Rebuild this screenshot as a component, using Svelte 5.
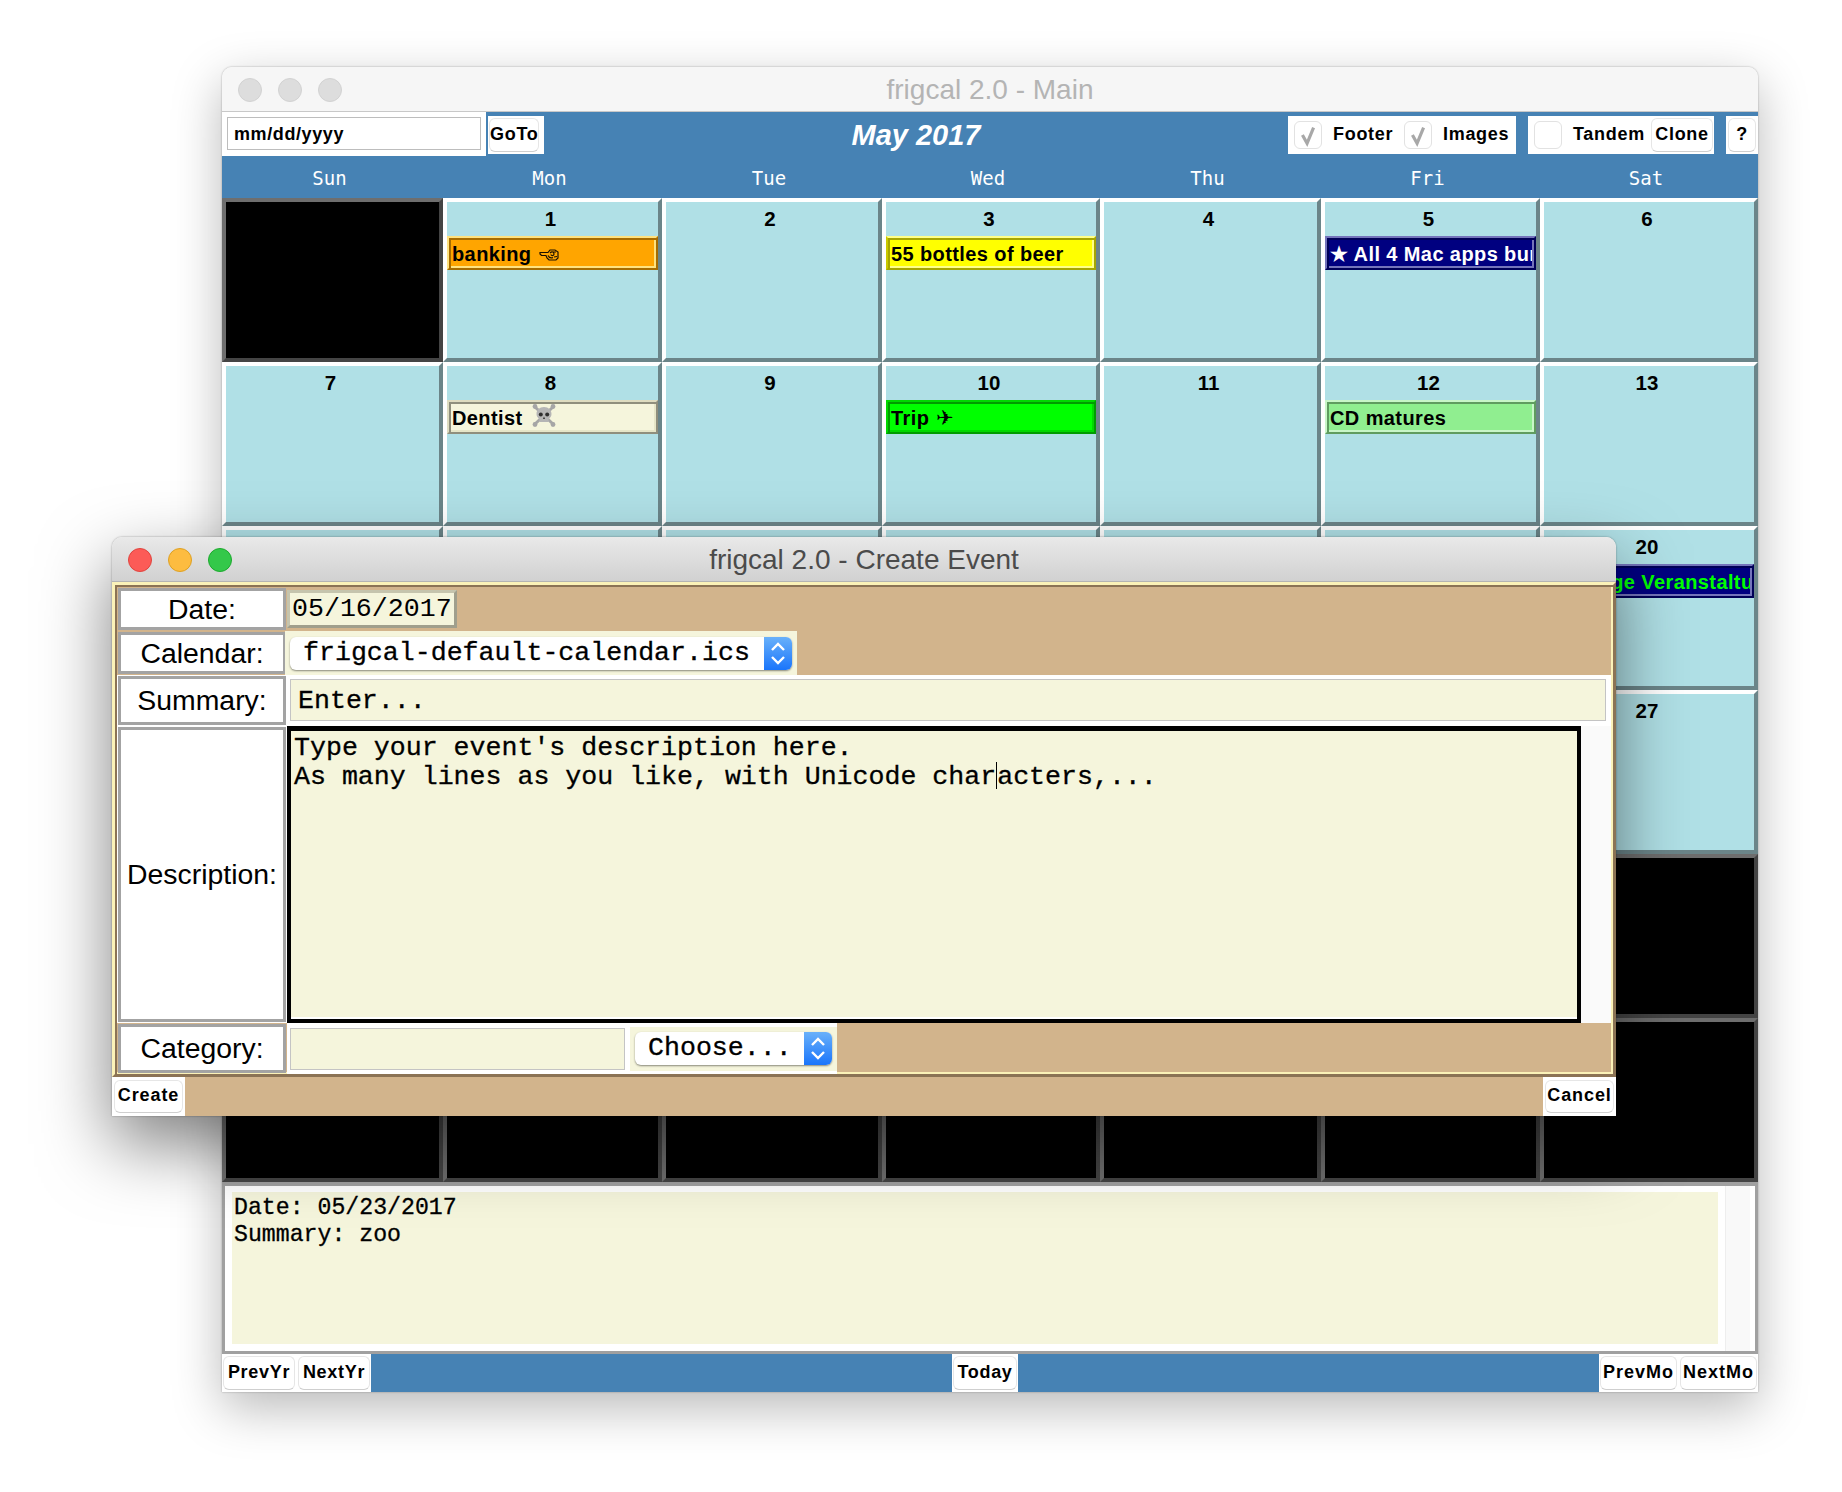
<script>
  const weekdays = ['Sun', 'Mon', 'Tue', 'Wed', 'Thu', 'Fri', 'Sat'];

  // event bars by day number
  const events = {
    1: { text: 'banking', icon: 'hand', kind: 'orange' },
    3: { text: '55 bottles of beer', kind: 'yellow' },
    5: { text: '★ All 4 Mac apps bundled', kind: 'navy' },
    8: { text: 'Dentist', icon: 'skull', kind: 'beige' },
    10: { text: 'Trip', icon: 'plane', kind: 'lime' },
    12: { text: 'CD matures', kind: 'green' },
    20: { text: 'Wichtige Veranstaltung', kind: 'navy2' },
    23: { text: 'zoo', kind: 'beige' }
  };

  // May 2017 starts on a Monday, 42 cells in all
  const cells = Array.from({ length: 42 }, (_, i) => (i >= 1 && i <= 31 ? i : 0));
</script>

<div class="desktop">
  <section class="win main">
    <header class="titlebar idle">
      <span class="dots"><i></i><i></i><i></i></span>
      <span class="wintitle">frigcal 2.0 - Main</span>
    </header>

    <div class="toolbar">
      <div class="goto">
        <div class="dateinput"><input value="mm/dd/yyyy" readonly /></div>
        <div class="btnbox"><button>GoTo</button></div>
      </div>
      <div class="month">May 2017</div>
      <div class="tools">
        <div class="toolbox first">
          <span class="check"><svg viewBox="0 0 28 28"><path d="M8 14l5 9 7-17" /></svg></span>
          <span class="toollabel">Footer</span>
          <span class="check"><svg viewBox="0 0 28 28"><path d="M8 14l5 9 7-17" /></svg></span>
          <span class="toollabel">Images</span>
        </div>
        <div class="toolbox second">
          <span class="check"></span>
          <span class="toollabel">Tandem</span>
          <button class="clone">Clone</button>
        </div>
        <div class="toolbox third"><button>?</button></div>
      </div>
    </div>

    <div class="weekdays">
      {#each weekdays as day}
        <div>{day}</div>
      {/each}
    </div>

    <div class="grid">
      {#each cells as n}
        {#if n}
          <div class="cell">
            <div class="num">{n}</div>
            {#if events[n]}
              <div class="event {events[n].kind}">
                <div class="eventtext">
                  {events[n].text}
                  {#if events[n].icon === 'hand'}
                    <svg class="hand" viewBox="0 0 20 12">
                      <path d="M1 3.5h8l2-2.5h5l3 2v6l-2 2h-7l-2-2-1-2.5H2.5L1 5z" />
                      <path d="M11 4c2-2 4-1 4 1s-3 2-3 .5M9 6.5c1 2 3 3 5 2M14 3l3 0M15 8l3-.5" />
                    </svg>
                  {:else if events[n].icon === 'skull'}
                    <svg class="skull" viewBox="0 0 24 23">
                      <path class="bone" d="M3 3l18 17M21 3L3 20" />
                      <circle class="bone-end" cx="3" cy="2.5" r="2.4" />
                      <circle class="bone-end" cx="21" cy="2.5" r="2.4" />
                      <circle class="bone-end" cx="3" cy="20.5" r="2.4" />
                      <circle class="bone-end" cx="21" cy="20.5" r="2.4" />
                      <path class="head" d="M12 3c-4.500 0-7.500 3-7.500 7 0 2.500 1.500 4 3 5v3h9v-3c1.500-1 3-2.500 3-5 0-4-3-7-7.500-7z" />
                      <circle class="socket" cx="8.800" cy="10.500" r="2" />
                      <circle class="socket" cx="15.200" cy="10.500" r="2" />
                      <path class="socket" d="M12 12.500l1 2.500h-2z" />
                    </svg>
                  {:else if events[n].icon === 'plane'}
                    <span class="plane">✈</span>
                  {/if}
                </div>
              </div>
            {/if}
          </div>
        {:else}
          <div class="cell empty"></div>
        {/if}
      {/each}
    </div>

    <div class="footerpane">
      <div class="footertext">Date: 05/23/2017<br />Summary: zoo</div>
      <div class="track"></div>
    </div>

    <div class="navbar">
      <div class="navgroup">
        <button>PrevYr</button>
        <button>NextYr</button>
      </div>
      <div class="navtoday"><button>Today</button></div>
      <div class="navgroup wide">
        <button>PrevMo</button>
        <button>NextMo</button>
      </div>
    </div>
  </section>

  <section class="win dialog">
    <header class="titlebar active">
      <span class="dots"><i class="red"></i><i class="amber"></i><i class="lit"></i></span>
      <span class="wintitle">frigcal 2.0 - Create Event</span>
    </header>

    <div class="form">
      <div class="row date-row">
        <div class="label">Date:</div>
        <input class="datefield" value="05/16/2017" readonly />
      </div>
      <div class="row cal-row">
        <div class="label">Calendar:</div>
        <div class="selectbox calbox">
          <div class="select">
            <span class="selecttext">frigcal-default-calendar.ics</span>
            <span class="arrows"><svg viewBox="0 0 28 33"><path d="M8 13l6-6 6 6M8 20l6 6 6-6" /></svg></span>
          </div>
        </div>
      </div>
      <div class="row summary-row">
        <div class="label">Summary:</div>
        <input class="summary" value="Enter..." readonly />
      </div>
      <div class="row desc-row">
        <div class="label">Description:</div>
        <div class="textarea">Type your event's description here.<br />As many lines as you like, with Unicode char<span class="caret"></span>acters,...</div>
        <div class="track"></div>
      </div>
      <div class="row cat-row">
        <div class="label">Category:</div>
        <div class="catgroup">
          <input class="category" readonly />
          <div class="selectbox choosebox">
            <div class="select">
              <span class="selecttext">Choose...</span>
              <span class="arrows"><svg viewBox="0 0 28 33"><path d="M8 13l6-6 6 6M8 20l6 6 6-6" /></svg></span>
            </div>
          </div>
        </div>
      </div>
    </div>

    <div class="actions">
      <div class="actbox"><button>Create</button></div>
      <div class="actbox"><button>Cancel</button></div>
    </div>
  </section>
</div>

<style>
  :global(body) {
    background: #fff;
  }

  .desktop {
    position: relative;
    width: 1842px;
    height: 1492px;
    overflow: hidden;
    background: #fff;
    font-family: "Liberation Sans", Arial, sans-serif;
  }

  .win {
    position: absolute;
    display: flex;
    flex-direction: column;
    background: #fff;
    border-radius: 10px 10px 0 0;
  }

  .main {
    left: 222px;
    top: 67px;
    width: 1536px;
    height: 1325px;
    box-shadow: 0 0 2px rgba(0, 0, 0, 0.35), 0 16px 50px rgba(0, 0, 0, 0.28);
  }

  .dialog {
    left: 112px;
    top: 537px;
    width: 1504px;
    height: 579px;
    box-shadow: 0 0 2px rgba(0, 0, 0, 0.4), 0 28px 70px rgba(0, 0, 0, 0.5);
  }

  /* title bars */
  .titlebar {
    position: relative;
    height: 45px;
    flex: none;
    display: flex;
    align-items: center;
    justify-content: center;
    border-radius: 10px 10px 0 0;
    box-sizing: border-box;
    border-bottom: 1px solid #c8c8c8;
  }

  .titlebar.idle {
    background: #f6f6f6;
    color: #b4b4b4;
  }

  .titlebar.active {
    background: linear-gradient(#e9e9e9, #d1d1d1);
    color: #4b4b4b;
    border-bottom-color: #b4b4b4;
  }

  .wintitle {
    font-size: 28px;
    padding-top: 2px;
  }

  .dots {
    position: absolute;
    left: 16px;
    top: 11px;
    display: flex;
    gap: 16px;
  }

  .dots i {
    display: block;
    width: 24px;
    height: 24px;
    box-sizing: border-box;
    border-radius: 50%;
    background: #dddddd;
    border: 1px solid #d2d2d2;
  }

  .dots i.red {
    background: #fc5b57;
    border-color: #e0443e;
  }

  .dots i.amber {
    background: #fdbc40;
    border-color: #dea123;
  }

  .dots i.lit {
    background: #34c84a;
    border-color: #1caa2d;
  }

  /* shared buttons */
  button {
    font-family: "Liberation Sans", Arial, sans-serif;
    font-weight: bold;
    font-size: 18px;
    letter-spacing: 0.7px;
    color: #000;
    background: #fff;
    border: 1px solid #e6e6e6;
    border-bottom-color: #cfcfcf;
    border-radius: 6px;
    padding: 0 0 2px;
    height: 34px;
  }

  /* toolbar */
  .toolbar {
    height: 44px;
    flex: none;
    display: flex;
    background: #4682b4;
  }

  .goto {
    display: flex;
    align-items: flex-start;
    width: 322px;
    flex: none;
  }

  .dateinput {
    width: 264px;
    height: 44px;
    flex: none;
    box-sizing: border-box;
    background: #fff;
    padding: 5px;
  }

  .dateinput input {
    width: 254px;
    height: 33px;
    box-sizing: border-box;
    border: 1px solid #bdbdbd;
    padding: 2px 6px 0;
    outline: none;
    font-family: "Liberation Sans", Arial, sans-serif;
    font-weight: bold;
    font-size: 18px;
    letter-spacing: 0.6px;
    color: #000;
  }

  .btnbox {
    margin: 4px 0 0 2px;
    width: 56px;
    height: 38px;
    background: #fff;
    display: flex;
    align-items: center;
    justify-content: flex-start;
    padding-left: 1px;
    box-sizing: border-box;
  }

  .btnbox button {
    width: 50px;
  }

  .month {
    flex: 1;
    text-align: center;
    color: #fff;
    font-size: 29px;
    font-weight: bold;
    font-style: italic;
    line-height: 46px;
  }

  .tools {
    width: 470px;
    flex: none;
    display: flex;
    padding-top: 4px;
    box-sizing: border-box;
    gap: 12px;
  }

  .toolbox {
    height: 38px;
    background: #fff;
    display: flex;
    align-items: center;
    box-sizing: border-box;
  }

  .toolbox.first {
    width: 228px;
    padding-left: 6px;
  }

  .toolbox.second {
    width: 186px;
    padding-left: 6px;
  }

  .toolbox.third {
    width: 32px;
    padding-left: 2px;
  }

  .toolbox.third button {
    width: 28px;
  }

  .check {
    width: 28px;
    height: 28px;
    flex: none;
    box-sizing: border-box;
    border: 1px solid #e2e2e2;
    border-radius: 6px;
    display: block;
  }

  .check svg {
    display: block;
    width: 26px;
    height: 26px;
  }

  .check path {
    fill: none;
    stroke: #a8a8a8;
    stroke-width: 3.4;
  }

  .toollabel {
    font-weight: bold;
    font-size: 18px;
    letter-spacing: 0.7px;
    margin-left: 11px;
    margin-bottom: 2px;
    width: 71px;
    color: #000;
  }

  .clone {
    width: 62px;
    margin-left: 7px;
  }

  /* calendar */
  .weekdays {
    height: 42px;
    flex: none;
    display: grid;
    grid-template-columns: 221px 219px 220px 218px 221px 219px 218px;
    background: #4682b4;
    color: #fff;
    font-family: "DejaVu Sans Mono", "Liberation Mono", monospace;
    font-size: 19px;
    line-height: 45px;
    text-align: center;
  }

  .weekdays div {
    padding-right: 6px;
  }

  .grid {
    flex: none;
    height: 984px;
    display: grid;
    grid-template-columns: 221px 219px 220px 218px 221px 219px 218px;
    grid-template-rows: repeat(6, 1fr);
  }

  .cell {
    min-width: 0;
    box-sizing: border-box;
    background: #b0e0e6;
    border: 4px solid;
    border-color: #fff #6b8589 #6b8589 #fff;
  }

  .cell.empty {
    background: #000;
    border-color: #6e6e6e #444 #444 #6e6e6e;
  }

  .num {
    height: 34px;
    line-height: 34px;
    text-align: center;
    font-weight: bold;
    font-size: 20.5px;
    color: #000;
    padding-right: 4px;
    box-sizing: border-box;
  }

  .event {
    height: 34px;
    box-sizing: border-box;
    padding: 2px;
    border: 2px solid;
    font-weight: bold;
    font-size: 20px;
    letter-spacing: 0.4px;
    color: #000;
  }

  .eventtext {
    height: 26px;
    line-height: 29px;
    padding-left: 1px;
    white-space: nowrap;
    overflow: hidden;
  }

  .hand {
    width: 20px;
    height: 12px;
    margin-left: 2px;
  }

  .hand path {
    fill: none;
    stroke: #1a1000;
    stroke-width: 1.2;
  }

  .skull {
    width: 24px;
    height: 23px;
    margin-left: 3px;
    vertical-align: -2px;
  }

  .bone {
    fill: none;
    stroke: #a6a6a6;
    stroke-width: 3;
  }

  .bone-end {
    fill: #a6a6a6;
  }

  .head {
    fill: #b5b5b5;
  }

  .socket {
    fill: #2e2e2e;
  }

  .plane {
    font-family: "DejaVu Sans", sans-serif;
    font-weight: normal;
    font-size: 21px;
    margin-left: 1px;
  }

  .orange {
    background: #ffa500;
    border-color: #ffe27f #a66c00 #a66c00 #ffe27f;
    box-shadow: inset 2px 2px 0 #a66c00, inset -2px -2px 0 #ffe27f;
  }

  .yellow {
    background: #ffff00;
    border-color: #ffff88 #a6a600 #a6a600 #c9c900;
    box-shadow: inset 2px 2px 0 #a6a600, inset -2px -2px 0 #ffff88;
  }

  .navy,
  .navy2 {
    background: #000080;
    color: #fff;
    border-color: #7474bb #000058 #000058 #7474bb;
    box-shadow: inset 2px 2px 0 #000058, inset -2px -2px 0 #7474bb;
  }

  .navy2 {
    color: #00ff00;
  }

  .beige {
    background: #f5f5dc;
    border-color: #dedcc0 #8f8f7d #8f8f7d #dedcc0;
    box-shadow: inset 2px 2px 0 #8f8f7d, inset -2px -2px 0 #e6e6c8;
  }

  .lime {
    background: #00ff00;
    border-color: #00d800 #009c00 #009c00 #00d800;
    box-shadow: inset 2px 2px 0 #009c00, inset -2px -2px 0 #00d800;
  }

  .green {
    background: #90ee90;
    border-color: #c8f6c8 #5f9c5f #5f9c5f #c8f6c8;
    box-shadow: inset 2px 2px 0 #5f9c5f, inset -2px -2px 0 #c8f6c8;
  }

  /* footer pane */
  .footerpane {
    height: 172px;
    flex: none;
    box-sizing: border-box;
    display: flex;
    background: #fff;
    border: 3px solid #a0a0a0;
    border-top-width: 4px;
    padding: 6px 5px 7px 7px;
  }

  .footertext {
    width: 1486px;
    flex: none;
    box-sizing: border-box;
    background: #f5f5dc;
    padding: 3px 2px;
    font-family: "Liberation Mono", monospace;
    font-size: 23.2px;
    line-height: 27px;
    color: #000;
    -webkit-text-stroke: 0.3px #000;
  }

  .footerpane .track {
    margin: -6px 0 -7px 7px;
    flex: 1;
    background: #f9f9f9;
    border-left: 1px solid #eeeeee;
  }

  .navbar {
    flex: 1;
    display: flex;
    justify-content: space-between;
    background: #4682b4;
    align-items: stretch;
  }

  .navgroup,
  .navtoday {
    display: flex;
    background: #fff;
    align-items: center;
    gap: 3px;
    padding: 0 1px;
  }

  .navgroup button {
    width: 72px;
  }

  .navgroup.wide button {
    width: 77px;
    letter-spacing: 1px;
  }

  .navtoday button {
    width: 64px;
  }

  /* dialog form */
  .form {
    height: 495px;
    flex: none;
    box-sizing: border-box;
    display: flex;
    flex-direction: column;
    background: #d2b48c;
    border: 3px solid;
    border-color: #fbf2b8 #8b7355 #8b7355 #fbf2b8;
    box-shadow: inset 2px 2px 0 #8b7355, inset -2px -2px 0 #fbf2b8;
    padding: 2px 2px 0;
  }

  .row {
    display: flex;
    flex: none;
    align-items: stretch;
  }

  .date-row,
  .cal-row {
    height: 44px;
  }

  .summary-row {
    height: 51px;
    background: #fff;
  }

  .desc-row {
    height: 297px;
    background: #fff;
  }

  .cat-row {
    height: 51px;
  }

  .label {
    width: 168px;
    margin: 1px;
    flex: none;
    box-sizing: border-box;
    display: flex;
    align-items: center;
    justify-content: center;
    background: #fff;
    border: 3px solid #a3a3a3;
    font-size: 28.4px;
    color: #000;
  }

  .datefield {
    width: 170px;
    height: 38px;
    margin: 3px 0 0 0;
    box-sizing: border-box;
    background: #f5f5dc;
    border: 3px solid;
    border-color: #c5c4ad #a09f8c #a09f8c #c5c4ad;
    padding: 0 2px;
    outline: none;
    font-family: "Liberation Mono", monospace;
    font-size: 26.6px;
    color: #000;
  }

  .selectbox {
    background: #f5f5dc;
    display: flex;
    align-items: center;
    box-sizing: border-box;
  }

  .calbox {
    width: 512px;
    margin-left: -2px;
    padding: 0 5px;
  }

  .select {
    flex: 1;
    height: 33px;
    display: flex;
    background: #fff;
    border-radius: 6px;
    box-shadow: 0 1px 2px rgba(0, 0, 0, 0.45);
  }

  .selecttext {
    flex: 1;
    padding-left: 13px;
    font-family: "Liberation Mono", monospace;
    font-size: 26.6px;
    line-height: 33px;
    color: #000;
    -webkit-text-stroke: 0.3px #000;
  }

  .arrows {
    width: 28px;
    flex: none;
    background: linear-gradient(#69b1fa, #1a75fb);
    border-radius: 0 6px 6px 0;
  }

  .arrows svg {
    display: block;
    width: 28px;
    height: 33px;
  }

  .arrows path {
    fill: none;
    stroke: #fff;
    stroke-width: 2.4;
  }

  .summary {
    width: 1316px;
    height: 42px;
    margin: 4px 0 0 3px;
    flex: none;
    box-sizing: border-box;
    background: #f5f5dc;
    border: 1px solid #c4c4c4;
    padding: 2px 7px 0;
    outline: none;
    font-family: "Liberation Mono", monospace;
    font-size: 26.6px;
    color: #000;
    -webkit-text-stroke: 0.3px #000;
  }

  .textarea {
    width: 1294px;
    flex: none;
    box-sizing: border-box;
    background: #f5f5dc;
    border: solid #000;
    border-width: 5px 4px 4px;
    padding: 3px 3px;
    box-shadow: inset 0 -2px 0 #fff;
    font-family: "Liberation Mono", monospace;
    font-size: 26.6px;
    line-height: 28px;
    color: #000;
    white-space: nowrap;
    -webkit-text-stroke: 0.3px #000;
  }

  .caret {
    display: inline-block;
    width: 0;
    height: 27px;
    border-left: 1.5px solid #000;
    vertical-align: -5px;
  }

  .desc-row .track {
    flex: 1;
    background: #fafafa;
  }

  .catgroup {
    display: flex;
    width: 550px;
    flex: none;
    background: #fff;
    align-items: center;
  }

  .category {
    width: 335px;
    height: 42px;
    flex: none;
    margin-left: 3px;
    box-sizing: border-box;
    background: #f5f5dc;
    border: 1px solid #c4c4c4;
    outline: none;
  }

  .choosebox {
    width: 208px;
    height: 44px;
    margin-left: 5px;
    padding: 0 5px;
  }

  .actions {
    flex: 1;
    display: flex;
    justify-content: space-between;
    background: #d2b48c;
  }

  .actbox {
    width: 73px;
    background: #fff;
    display: flex;
    align-items: center;
    justify-content: center;
  }

  .actbox button {
    width: 69px;
    height: 33px;
    letter-spacing: 0.9px;
  }
</style>
